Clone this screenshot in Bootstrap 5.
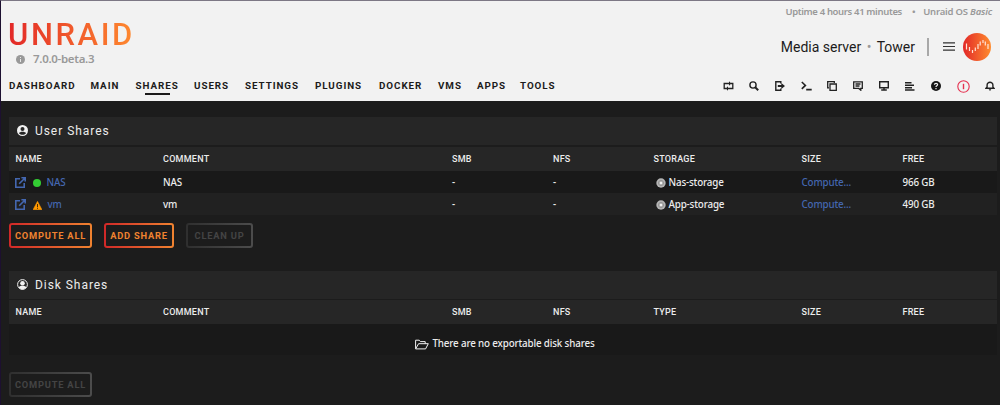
<!DOCTYPE html>
<html lang="en">
<head>
  <meta charset="UTF-8">
  <meta name="viewport" content="width=device-width, initial-scale=1.0">
  <title>Tower/Shares</title>
  <link href="https://cdn.jsdelivr.net/npm/bootstrap@5.3.3/dist/css/bootstrap.min.css" rel="stylesheet">
  <style>
    body {
      background: #1c1c1c;
      color: #ececec;
      font-family: "Noto Sans", sans-serif;
      font-size: 9.8px;
      font-weight: 500;
      letter-spacing: -.15px;
      line-height: 14px;
      height: 405px;
      overflow: hidden;
      border-left: 1px solid #1d1030;
      border-top: 1px solid #7d7885;
    }
    svg { display: block; flex: none; }
    a { color: #4467b0; text-decoration: none; }
    .top-bar { background: #f2f2f2; color: #1c1b1b; height: 100px; }
    .brand-col { padding-left: 8px; }
    .logo-text {
      font: 500 31px/30px Roboto, sans-serif;
      letter-spacing: 2.6px;
      margin-top: 19px;
      margin-left: -1px;
      background: linear-gradient(90deg, #e22828, #ff8c2f);
      -webkit-background-clip: text;
      background-clip: text;
      color: transparent;
      width: 130px;
    }
    .version { color: #999; font-weight: 600; font-size: 11.5px; line-height: 14px; padding: 2px 0 0 7px; gap: 8px; letter-spacing: -.3px; }
    .uptime { color: #999; font-size: 9.5px; font-weight: 600; letter-spacing: -.35px; padding: 4px 8px 0 0; }
    .uptime-sep { padding: 0 8px 0 10px; }
    .edition { letter-spacing: -.2px; }
    .server { font: 400 14px Roboto, sans-serif; letter-spacing: 0; padding: 11px 9px 0 0; height: 44px; }
    .server-sep { color: #999; margin: 0 2px; }
    .server-bar { width: 2px; height: 18px; background: #a8a8a8; margin: 0 14px 0 12px; }
    .main-menu { display: grid; grid-template-columns: 81.5px 45px 58.5px 51px 70px 64px 59px 39px 43px 50px; font: 700 9.8px/14px Roboto, sans-serif; letter-spacing: .95px; padding: 1px 0 0 8px; }
    .active-item { border-bottom: 2px solid #1c1b1b; width: 25px; margin-left: 9px; }
    .tool-icons { display: grid; grid-template-columns: repeat(9, 26px) 28px 26px; justify-items: center; align-items: center; height: 16px; margin-right: -3px; }
    .content { padding: 16px 3px 0 8px; }
    .panel-title { background: #262626; height: 28px; padding: 0 0 1px 8px; gap: 7px; font: 400 12px Roboto, sans-serif; letter-spacing: .95px; margin-bottom: 2px; }
    .share-row { display: grid; grid-template-columns: 147.5px 289px 101px 100.5px 148px 101px 1fr; align-items: center; height: 22px; padding: 1px 0 0 6.5px; background: #212121; }
    .share-head { height: 24px; background: #262626; font: 500 9px Roboto, sans-serif; letter-spacing: .25px; padding: 0 0 1px 6.5px; }
    .share-dark { background: #191919; }
    .share-link { margin-left: -1px; }
    .dot { width: 8px; height: 8px; margin: 1px 6px 0 7px; border-radius: 50%; background: #33cc33; }
    .warn { margin: 1px 6px 0 7px; }
    .pool { padding-left: 2px; gap: 3px; }
    .btn-row { padding-top: 8px; gap: 12px; }
    .btn-grad {
      height: 25px;
      padding: 0;
      border: 2px solid transparent;
      border-radius: 3px;
      font: 700 9.3px/21px Roboto, sans-serif;
      letter-spacing: .8px;
      white-space: nowrap;
      color: #f08330;
      background: linear-gradient(#1c1c1c, #1c1c1c) padding-box, linear-gradient(90deg, #d02828, #f08330) border-box;
    }
    .btn-grad:disabled {
      color: #444;
      opacity: 1;
      border-color: transparent;
      background: linear-gradient(#1c1c1c, #1c1c1c) padding-box, linear-gradient(90deg, #2f2f2f, #4c4c4c) border-box;
    }
    .w-compute { width: 83px; }
    .w-add { width: 70px; }
    .w-clean { width: 67px; }
    .disk-panel { margin-top: 23px; }
    .disk-title { margin-bottom: 1px; }
    .empty-row { height: 31px; padding: 9px 0 0 4px; gap: 3px; }
    .disk-btn { padding-top: 17px; }
  </style>
</head>
<body>
  <svg width="0" height="0" class="position-absolute">
    <defs>
      <linearGradient id="brand"><stop offset="0" stop-color="#e22828"/><stop offset="1" stop-color="#ff8c2f"/></linearGradient>
      <symbol id="ext" viewBox="0 0 11 11"><path d="M5 1.7H.8v8.5h8.4V6M6.4.8h3.8v3.8M10 1 4.2 6.8" fill="none" stroke="#4467b0" stroke-width="1.6"/></symbol>
      <symbol id="disc" viewBox="0 0 10 10"><circle cx="5" cy="5" r="4.7" fill="#b5b5b5"/><circle cx="5" cy="5" r="2.6" fill="none" stroke="#8b8b8b" stroke-width=".8"/><circle cx="5" cy="5" r="1.1" fill="#fff"/></symbol>
    </defs>
  </svg>

  <header class="top-bar">
    <div class="d-flex justify-content-between">
      <div class="brand-col">
        <div class="logo-text">UNRAID</div>
        <div class="version d-flex align-items-center">
          <svg width="9" height="9" viewBox="0 0 9 9"><circle cx="4.5" cy="4.5" r="4.5" fill="#999"/><path d="M4.5 2v1M4.5 4v3" stroke="#e8e8e8"/></svg>
          <span>7.0.0-beta.3</span>
        </div>
      </div>
      <div>
        <div class="uptime d-flex justify-content-end"><span>Uptime 4 hours 41 minutes</span><span class="uptime-sep">•</span><span class="edition">Unraid OS <i>Basic</i></span></div>
        <div class="server d-flex align-items-center justify-content-end">
          <span>Media server <span class="server-sep">•</span> Tower</span>
          <div class="server-bar"></div>
          <svg width="12" height="9" viewBox="0 0 12 9"><path d="M0 .8h12M0 4.5h12M0 8.2h12" stroke="#333" stroke-width="1.2"/></svg>
          <svg class="ms-2" width="28" height="28" viewBox="0 0 28 28"><circle cx="14" cy="14" r="14" fill="url(#brand)"/><path d="M3.5 10.5v6M6.5 14v4M9.5 17v3M12.3 14.5v3.5M15 11v5M17.2 8.5v4M20 7v3M22.3 8.5v4M25 11v5" stroke="#ffe3d6" stroke-width="1.2"/></svg>
        </div>
      </div>
    </div>
    <nav class="d-flex justify-content-between pt-2 mt-1">
      <div class="main-menu">
        <span>DASHBOARD</span><span>MAIN</span>
        <span>SHARES<div class="active-item"></div></span>
        <span>USERS</span><span>SETTINGS</span><span>PLUGINS</span><span>DOCKER</span><span>VMS</span><span>APPS</span><span>TOOLS</span>
      </div>
      <div class="tool-icons">
        <svg width="11" height="10" viewBox="0 0 11 10" fill="none" stroke="#222" stroke-width="1.3"><path d="M3.2 7.5H1.2V2.5h5M7.8 2.5h2v5H5"/><path d="M6 .2v4.6l2.3-2.3zM5 5.2v4.6L2.7 7.5z" fill="#222" stroke="none"/></svg>
        <svg width="10" height="10" viewBox="0 0 10 10" fill="none" stroke="#222"><circle cx="4" cy="4" r="3.1" stroke-width="1.4"/><path d="m6.2 6.2 3 3" stroke-width="2"/></svg>
        <svg width="10" height="10" viewBox="0 0 10 10"><path d="M5.8 2.6V.8H.8v8.4h5V7.4" fill="none" stroke="#222" stroke-width="1.4"/><path d="M2.8 4h3.5V2L10 5 6.3 8V6H2.8z" fill="#222"/></svg>
        <svg width="11" height="10" viewBox="0 0 11 10" fill="none" stroke="#222" stroke-width="1.6"><path d="m.8 1 3.6 3.4L.8 7.8M5.2 8.6h5.5"/></svg>
        <svg width="10" height="10" viewBox="0 0 10 10" fill="none" stroke="#222" stroke-width="1.3"><path d="M2 6.8H.7V.7h6.6V2M3 3h6.3v6.3H3z"/></svg>
        <svg width="10" height="10" viewBox="0 0 10 10" fill="none" stroke="#222" stroke-width="1.3"><path d="M.7.8h8.6v6.6H7.8v1.8L5.8 7.4H.7zM2.5 3h5M2.5 5h4"/></svg>
        <svg width="10" height="10" viewBox="0 0 10 10" fill="none" stroke="#222" stroke-width="1.4"><path d="M.7.8h8.6v6H.7zM5 7v1.5M2.2 9h5.6"/></svg>
        <svg width="10" height="9" viewBox="0 0 10 9" stroke="#222" stroke-width="1.5"><path d="M0 .8h6.5M0 3.2h9M0 5.7h7M0 8.1h9.5"/></svg>
        <svg width="10" height="10" viewBox="0 0 10 10"><circle cx="5" cy="5" r="5" fill="#161616"/><path d="M3.4 3.8C3.5 1.9 6.7 1.9 6.6 3.8 6.5 4.9 5 4.8 5 6M5 7v1.2" fill="none" stroke="#f2f2f2" stroke-width="1.2"/></svg>
        <svg width="13" height="13" viewBox="0 0 13 13" fill="none" stroke="#e5304f"><circle cx="6.5" cy="6.5" r="5.7" stroke-width="1.1"/><path d="M6.5 3.8v5.4" stroke-width="1.4"/></svg>
        <svg width="10" height="10" viewBox="0 0 10 10"><path d="M1 7.3 2.1 6V4C2.1.4 7.9.4 7.9 4v2L9 7.3z" fill="none" stroke="#222" stroke-width="1.4"/><path d="M3.7 8.3h2.6L5 9.9z" fill="#222"/></svg>
      </div>
    </nav>
  </header>

  <main class="content">
    <section>
      <div class="panel-title d-flex align-items-center">
        <svg width="11" height="11" viewBox="0 0 11 11"><circle cx="5.5" cy="5.5" r="5.5" fill="#f2f2f2"/><circle cx="5.5" cy="4" r="2" fill="#262626"/><path d="M2 8.2C2.5 6.2 8.5 6.2 9 8.2 7 10.3 4 10.3 2 8.2z" fill="#262626"/></svg>
        <span>User Shares</span>
      </div>
      <div class="share-row share-head"><span>NAME</span><span>COMMENT</span><span>SMB</span><span>NFS</span><span>STORAGE</span><span>SIZE</span><span>FREE</span></div>
      <div class="share-row share-dark">
        <a href="#" class="share-link d-flex align-items-center"><svg width="11" height="11"><use href="#ext"/></svg><span class="dot"></span>NAS</a>
        <span>NAS</span><span>-</span><span>-</span>
        <span class="pool d-flex align-items-center"><svg width="10" height="10"><use href="#disc"/></svg>Nas-storage</span>
        <a href="#">Compute...</a><span>966 GB</span>
      </div>
      <div class="share-row">
        <a href="#" class="share-link d-flex align-items-center"><svg width="11" height="11"><use href="#ext"/></svg><svg class="warn" width="9" height="9" viewBox="0 0 9 9"><path d="M4.5.3 9 8.7H0z" fill="#ff9900" stroke="#ff9900" stroke-width=".5"/><path d="M4.5 3v3M4.5 6.7v1.1" stroke="#4a2b00"/></svg>vm</a>
        <span>vm</span><span>-</span><span>-</span>
        <span class="pool d-flex align-items-center"><svg width="10" height="10"><use href="#disc"/></svg>App-storage</span>
        <a href="#">Compute...</a><span>490 GB</span>
      </div>
      <div class="btn-row d-flex">
        <button class="btn btn-grad w-compute">COMPUTE ALL</button>
        <button class="btn btn-grad w-add">ADD SHARE</button>
        <button class="btn btn-grad w-clean" disabled>CLEAN UP</button>
      </div>
    </section>

    <section class="disk-panel">
      <div class="panel-title disk-title d-flex align-items-center">
        <svg width="11" height="11" viewBox="0 0 11 11"><circle cx="5.5" cy="5.5" r="4.9" fill="none" stroke="#f2f2f2" stroke-width="1"/><circle cx="5.5" cy="4.2" r="2.3" fill="#f2f2f2"/><path d="M1.7 8.6C2 6 9 6 9.3 8.6 7.5 11 3.5 11 1.7 8.6z" fill="#f2f2f2"/></svg>
        <span>Disk Shares</span>
      </div>
      <div class="share-row share-head"><span>NAME</span><span>COMMENT</span><span>SMB</span><span>NFS</span><span>TYPE</span><span>SIZE</span><span>FREE</span></div>
      <div class="share-dark empty-row d-flex justify-content-center align-items-center">
        <svg width="14" height="11" viewBox="0 0 14 11" fill="none" stroke="#f2f2f2" stroke-linejoin="round"><path d="M.6 9.7V1.2h3.6l1.2 1.4h4.8v2.1M.6 9.9l3-5.2h9.7l-2.7 5.2z"/></svg>
        <span>There are no exportable disk shares</span>
      </div>
      <div class="btn-row disk-btn d-flex"><button class="btn btn-grad w-compute" disabled>COMPUTE ALL</button></div>
    </section>
  </main>
  <script src="https://cdn.jsdelivr.net/npm/bootstrap@5.3.3/dist/js/bootstrap.bundle.min.js"></script>
</body>
</html>
